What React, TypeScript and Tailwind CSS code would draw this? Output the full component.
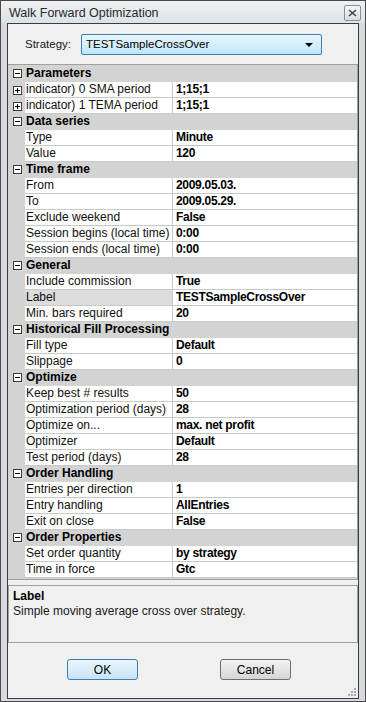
import React from 'react';

type Row = { name: string; value?: string; cat?: boolean; plus?: boolean; selected?: boolean };

const rows: Row[] = [
  { name: 'Parameters', cat: true },
  { name: 'indicator) 0 SMA period', value: '1;15;1', plus: true },
  { name: 'indicator) 1 TEMA period', value: '1;15;1', plus: true },
  { name: 'Data series', cat: true },
  { name: 'Type', value: 'Minute' },
  { name: 'Value', value: '120' },
  { name: 'Time frame', cat: true },
  { name: 'From', value: '2009.05.03.' },
  { name: 'To', value: '2009.05.29.' },
  { name: 'Exclude weekend', value: 'False' },
  { name: 'Session begins (local time)', value: '0:00' },
  { name: 'Session ends (local time)', value: '0:00' },
  { name: 'General', cat: true },
  { name: 'Include commission', value: 'True' },
  { name: 'Label', value: 'TESTSampleCrossOver', selected: true },
  { name: 'Min. bars required', value: '20' },
  { name: 'Historical Fill Processing', cat: true },
  { name: 'Fill type', value: 'Default' },
  { name: 'Slippage', value: '0' },
  { name: 'Optimize', cat: true },
  { name: 'Keep best # results', value: '50' },
  { name: 'Optimization period (days)', value: '28' },
  { name: 'Optimize on...', value: 'max. net profit' },
  { name: 'Optimizer', value: 'Default' },
  { name: 'Test period (days)', value: '28' },
  { name: 'Order Handling', cat: true },
  { name: 'Entries per direction', value: '1' },
  { name: 'Entry handling', value: 'AllEntries' },
  { name: 'Exit on close', value: 'False' },
  { name: 'Order Properties', cat: true },
  { name: 'Set order quantity', value: 'by strategy' },
  { name: 'Time in force', value: 'Gtc' },
];

function ExpandBox({ open }: { open: boolean }) {
  return (
    <svg width="9" height="9" viewBox="0 0 9 9" className="block">
      <rect x="0.5" y="0.5" width="8" height="8" fill="#fff" stroke="#3c3c3c" />
      <line x1="2" y1="4.5" x2="7" y2="4.5" stroke="#000" />
      {!open && <line x1="4.5" y1="2" x2="4.5" y2="7" stroke="#000" />}
    </svg>
  );
}

function GridRow({ row }: { row: Row }) {
  if (row.cat) {
    return (
      <div className="flex h-[16px] bg-[#d3d3d3] border-b border-[#d3d3d3]">
        <div className="w-[17px] flex items-center justify-center pl-[1px]">
          <ExpandBox open />
        </div>
        <div className="flex-1 pl-[1px] font-bold leading-[15px] text-black">{row.name}</div>
      </div>
    );
  }
  return (
    <div className="flex h-[16px]">
      <div className="w-[17px] bg-[#d3d3d3] flex items-center justify-center pl-[1px]">
        {row.plus && <ExpandBox open={false} />}
      </div>
      <div
        className={`w-[148px] pl-[1px] border-b border-r border-[#c8c8c8] leading-[15px] text-[#101010] whitespace-nowrap overflow-hidden ${
          row.selected ? 'bg-[#dcdcdc]' : 'bg-white'
        }`}
      >
        {row.name}
      </div>
      <div className="flex-1 bg-white pl-[3px] border-b border-[#c8c8c8] font-bold leading-[15px] text-black tracking-[-0.3px] whitespace-nowrap overflow-hidden">
        {row.value}
      </div>
    </div>
  );
}

export default function App() {
  return (
    <div
      className="w-[366px] h-[702px] bg-[#d7dbdf] border border-[#4a4a4a] flex flex-col text-[12px]"
      style={{ fontFamily: '"Liberation Sans", Arial, sans-serif' }}
    >
      {/* Title bar */}
      <div className="h-[22px] flex items-start justify-between pl-[8px] pr-[4px] bg-gradient-to-b from-[#eef1f3] to-[#dde2e6]">
        <span className="text-[12.5px] leading-[24px] text-[#2a2a2a]">Walk Forward Optimization</span>
        <div className="mt-[4px] w-[17px] h-[16px] border border-[#8a8f94] rounded-[2px] bg-gradient-to-b from-[#f6f7f8] to-[#d9dde0] flex items-center justify-center">
          <svg width="9" height="8" viewBox="0 0 9 8">
            <path d="M1 1 L8 7 M8 1 L1 7" stroke="#444" strokeWidth="1.6" />
          </svg>
        </div>
      </div>

      {/* Client area */}
      <div className="flex-1 mx-[6px] mb-[2px] border border-[#3c3c3c] bg-[#f0f0f0] flex flex-col">
        <div className="flex items-center h-[21px] mt-[10px] pl-[17px]">
          <span className="w-[56px] text-[11.5px] text-[#1a1a1a]">Strategy:</span>
          <div className="w-[241px] h-[21px] border border-[#3c7fb1] rounded-[2px] bg-gradient-to-b from-[#eaf6fd] to-[#bee6fd] flex items-center justify-between pl-[4px] pr-[8px]">
            <span className="text-[11.5px] text-black">TESTSampleCrossOver</span>
            <svg width="8" height="4" viewBox="0 0 8 4">
              <path d="M0 0 H8 L4 4 Z" fill="#000" />
            </svg>
          </div>
        </div>

        {/* Property grid */}
        <div className="mt-[9px] border-t border-b border-r border-[#a0a0a0] bg-[#d3d3d3] pt-[1px] pb-[1px]">
          {rows.map((r, i) => (
            <GridRow key={i} row={r} />
          ))}
        </div>

        {/* Description */}
        <div className="mt-[5px] h-[58px] border border-[#a0a0a0] bg-[#f0f0f0] pl-[4px] pt-[3px]">
          <div className="font-bold text-black leading-[15px]">Label</div>
          <div className="text-[#1a1a1a] leading-[15px]">Simple moving average cross over strategy.</div>
        </div>

        {/* Buttons */}
        <div className="flex mt-[16px] pl-[59px] gap-[82px]">
          <button className="w-[71px] h-[21px] rounded-[3px] border border-[#3c7fb1] bg-gradient-to-b from-[#eaf6fd] to-[#c8e4f5] text-black text-[12px]">
            OK
          </button>
          <button className="w-[71px] h-[21px] rounded-[3px] border border-[#707070] bg-gradient-to-b from-[#f2f2f2] to-[#d6d6d6] text-black text-[12px]">
            Cancel
          </button>
        </div>
        <div className="flex-1 flex items-end justify-end pr-[2px] pb-[2px]">
          <svg width="10" height="10" viewBox="0 0 10 10">
            <g fill="#a8a8a8">
              <rect x="8" y="2" width="2" height="2" />
              <rect x="5" y="5" width="2" height="2" />
              <rect x="8" y="5" width="2" height="2" />
              <rect x="2" y="8" width="2" height="2" />
              <rect x="5" y="8" width="2" height="2" />
              <rect x="8" y="8" width="2" height="2" />
            </g>
          </svg>
        </div>
      </div>
    </div>
  );
}
